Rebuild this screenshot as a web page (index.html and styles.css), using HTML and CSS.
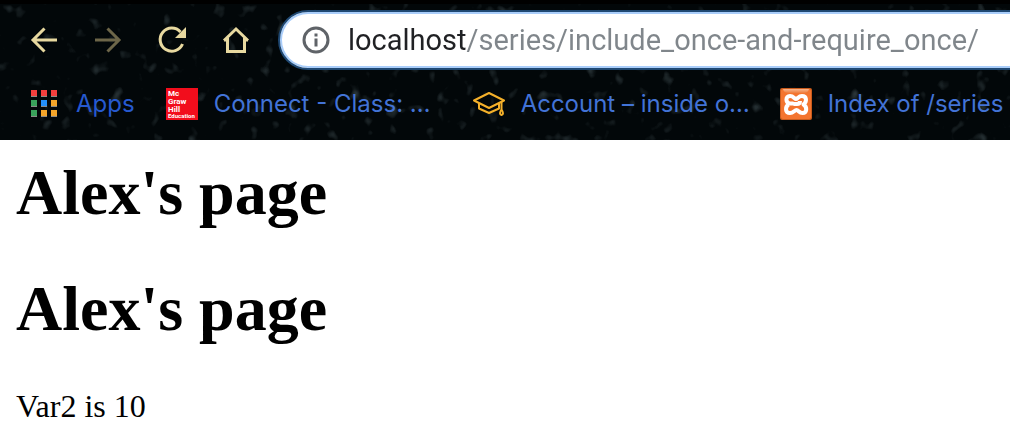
FILE: index.html
```html
<!DOCTYPE html>
<html lang="en">
<head>
<meta charset="utf-8">
<title>Alex's page</title>
<link rel="stylesheet" href="styles.css">
</head>
<body>
<header class="browser">
  <svg class="stars" aria-hidden="true">
    <filter id="grain" x="0" y="0" width="100%" height="100%" color-interpolation-filters="sRGB">
      <feTurbulence type="fractalNoise" baseFrequency="0.08 0.07" numOctaves="2" seed="8"/>
      <feColorMatrix values="0 0 0 0 0.35  0 0 0 0 0.42  0 0 0 0 0.44  1.600 0 0 0 -1.010"/>
    </filter>
    <rect width="100%" height="100%" filter="url(#grain)"/>
  </svg>
  <nav class="toolbar" aria-label="Navigation">
    <button class="tool" type="button" aria-label="Back"><svg class="icon" viewBox="0 0 32 32"><path d="M29 16H5M16.500 4.500L5 16l11.500 11.500"/></svg></button>
    <button class="tool" type="button" aria-label="Forward" disabled><svg class="icon" viewBox="0 0 32 32"><path d="M3 16h24M15.500 4.500L27 16 15.500 27.500"/></svg></button>
    <button class="tool" type="button" aria-label="Reload"><svg class="icon" viewBox="0 0 32 32"><path d="M26.500 20A11.600 11.600 0 1 1 24.500 8"/><path class="solid" d="M30 3v11H19z"/></svg></button>
    <button class="tool" type="button" aria-label="Home"><svg class="icon" viewBox="0 0 32 32"><path d="M4 16.500L16 5l12 11.500M7.500 14v13.500h17V14M4 16h3.500M24.500 16H28"/></svg></button>
    <div class="omnibox">
      <svg class="info" viewBox="0 0 28 28" aria-hidden="true"><circle cx="14" cy="14" r="12"/><path d="M14 12.500v8M14 7.500v3"/></svg>
      <input class="address" type="text" aria-label="Address" value="localhost/series/include_once-and-require_once/" spellcheck="false">
    </div>
  </nav>
  <nav class="bookmarks" aria-label="Bookmarks">
    <a class="bookmark apps" href="#apps">
      <svg class="favicon" viewBox="0 0 32 32" aria-hidden="true">
        <path fill="#8b8b88" d="M3 8h6v1H3zM13 8h6v1h-6zM23 8h6v1h-6zM3 18h6v1H3zM13 18h6v1h-6zM23 18h6v1h-6zM3 28h6v1H3zM13 28h6v1h-6zM23 28h6v1h-6z"/>
        <path fill="#f43f3e" d="M3 2h6v6H3zM13 2h6v6h-6zM23 2h6v6h-6z"/>
        <path fill="#3aa35c" d="M3 12h6v6H3zM3 22h6v6H3z"/>
        <path fill="#2490fb" d="M13 12h6v6h-6z"/>
        <path fill="#f4a52a" d="M23 12h6v6h-6zM13 22h6v6h-6zM23 22h6v6h-6z"/>
      </svg>
      <span>Apps</span>
    </a>
    <a class="bookmark" href="#connect">
      <svg class="favicon" viewBox="0 0 32 32" aria-hidden="true">
        <path fill="#f20d1c" d="M0 0h32v32H0z"/>
        <g class="press"><text x="2" y="8">Mc</text><text x="2" y="16">Graw</text><text x="2" y="24">Hill</text><text class="press-small" x="2" y="30">Education</text></g>
      </svg>
      <span class="title">Connect - Class: …</span>
    </a>
    <a class="bookmark" href="#account">
      <svg class="favicon" viewBox="0 0 32 32" aria-hidden="true"><g class="cap"><path d="M1 12.500L16 5l15 7.500L16 20z"/><path d="M6 15v5.500L16 25l10-4.500V15"/><path d="M28.500 14v7.500c-2 3-2 5 0 5.500 2-.500 2-2.500 0-5.500"/></g></svg>
      <span class="title">Account – inside o…</span>
    </a>
    <a class="bookmark" href="#series">
      <svg class="favicon" viewBox="0 0 32 32" aria-hidden="true">
        <defs><linearGradient id="shine" x1="0" y1="0" x2="0" y2="1"><stop offset="0" stop-color="#f7b58d"/><stop offset="1" stop-color="#ef7d3c"/></linearGradient></defs>
        <rect width="32" height="32" rx="2" fill="#c95b1c"/>
        <rect x="1" y="1" width="30" height="30" rx="2" fill="#f4752f"/>
        <path fill="url(#shine)" d="M3 1h26q-1 4-5 4H8Q4 5 3 1z"/>
        <path class="xampp" d="M13.500 15.500H10C5.500 15 5 8 10 8c3.500 0 4.500 3 6 3s2.500-3 6-3c5 0 5 6 1.500 8.500C27.500 19 27 25 22.500 25c-3.500 0-4-3-6-3s-3 3-6.500 3c-5 0-5-6-1.500-8.500M13.500 16h3.500c2 0 3-1 3-3"/>
      </svg>
      <span>Index of /series</span>
    </a>
  </nav>
</header>
<main class="page">
  <h1 class="heading">Alex's page</h1>
  <h1 class="heading">Alex's page</h1>
  <p class="output">Var2 is 10</p>
</main>
</body>
</html>
```
FILE: styles.css
```css
* { box-sizing: border-box; }

body {
  margin: 0;
  background: #fff;
  color: #000;
  font-family: "Liberation Serif", "Times New Roman", serif;
}

.browser {
  position: relative;
  z-index: 0;
  overflow: hidden;
  padding: 6px 0 20px;
  border-top: 4px solid #000;
  background: #020709;
  font-family: Roboto, "Liberation Sans", sans-serif;
}

.stars {
  position: absolute;
  z-index: -1;
  inset: 0;
  width: 100%;
  height: 100%;
}

.toolbar {
  display: flex;
  align-items: center;
  gap: 32px;
  padding-left: 28px;
}

.tool {
  flex: none;
  width: 32px;
  height: 32px;
  padding: 0;
  border: 0;
  background: none;
  color: #e8d9a0;
}

.tool:disabled { color: #6d6649; }

.icon {
  display: block;
  fill: none;
  stroke: currentColor;
  stroke-width: 3;
}

.icon .solid { fill: currentColor; stroke: none; }

.omnibox {
  display: flex;
  flex: 1;
  align-items: center;
  gap: 18px;
  height: 60px;
  margin-left: -6px;
  margin-right: -40px;
  padding: 0 40px 0 22px;
  border: 2px solid #1f4872;
  border-radius: 30px;
  background: #fff;
  box-shadow: inset 0 0 0 2px #a9cdfa;
}

.info {
  flex: none;
  width: 28px;
  fill: none;
  stroke: #5f6368;
  stroke-width: 3;
}

.address {
  flex: 1;
  min-width: 0;
  height: 40px;
  padding: 0;
  border: 0;
  outline: 0;
  background: linear-gradient(90deg, #202124 118px, #80868b 118px) text;
  color: transparent;
  font: 29px Roboto, "Liberation Sans", sans-serif;
}

.bookmarks {
  display: flex;
  align-items: center;
  gap: 31px;
  padding: 18px 0 0 28px;
  white-space: nowrap;
}

.bookmark {
  display: flex;
  flex: none;
  align-items: center;
  gap: 16px;
  color: #4273d6;
  font-family: Inter, Roboto, sans-serif;
  font-size: 24px;
  line-height: 32px;
  text-decoration: none;
}

.apps { color: #2659cf; }

.title { width: 228px; }

.favicon {
  flex: none;
  width: 32px;
  height: 32px;
}

.press {
  fill: #fff;
  font: bold 8px Roboto, sans-serif;
}

.press-small { font-size: 6px; }

.cap {
  fill: none;
  stroke: #f4b02a;
  stroke-width: 2;
  stroke-linejoin: round;
}

.xampp {
  fill: none;
  stroke: #fff;
  stroke-width: 4;
  stroke-linejoin: round;
}

.page { padding: 16px; }

.heading {
  margin: 0 0 43px;
  font-size: 64px;
  line-height: 73px;
}

.output {
  margin: 0;
  font-size: 32px;
  line-height: 36px;
}
```
